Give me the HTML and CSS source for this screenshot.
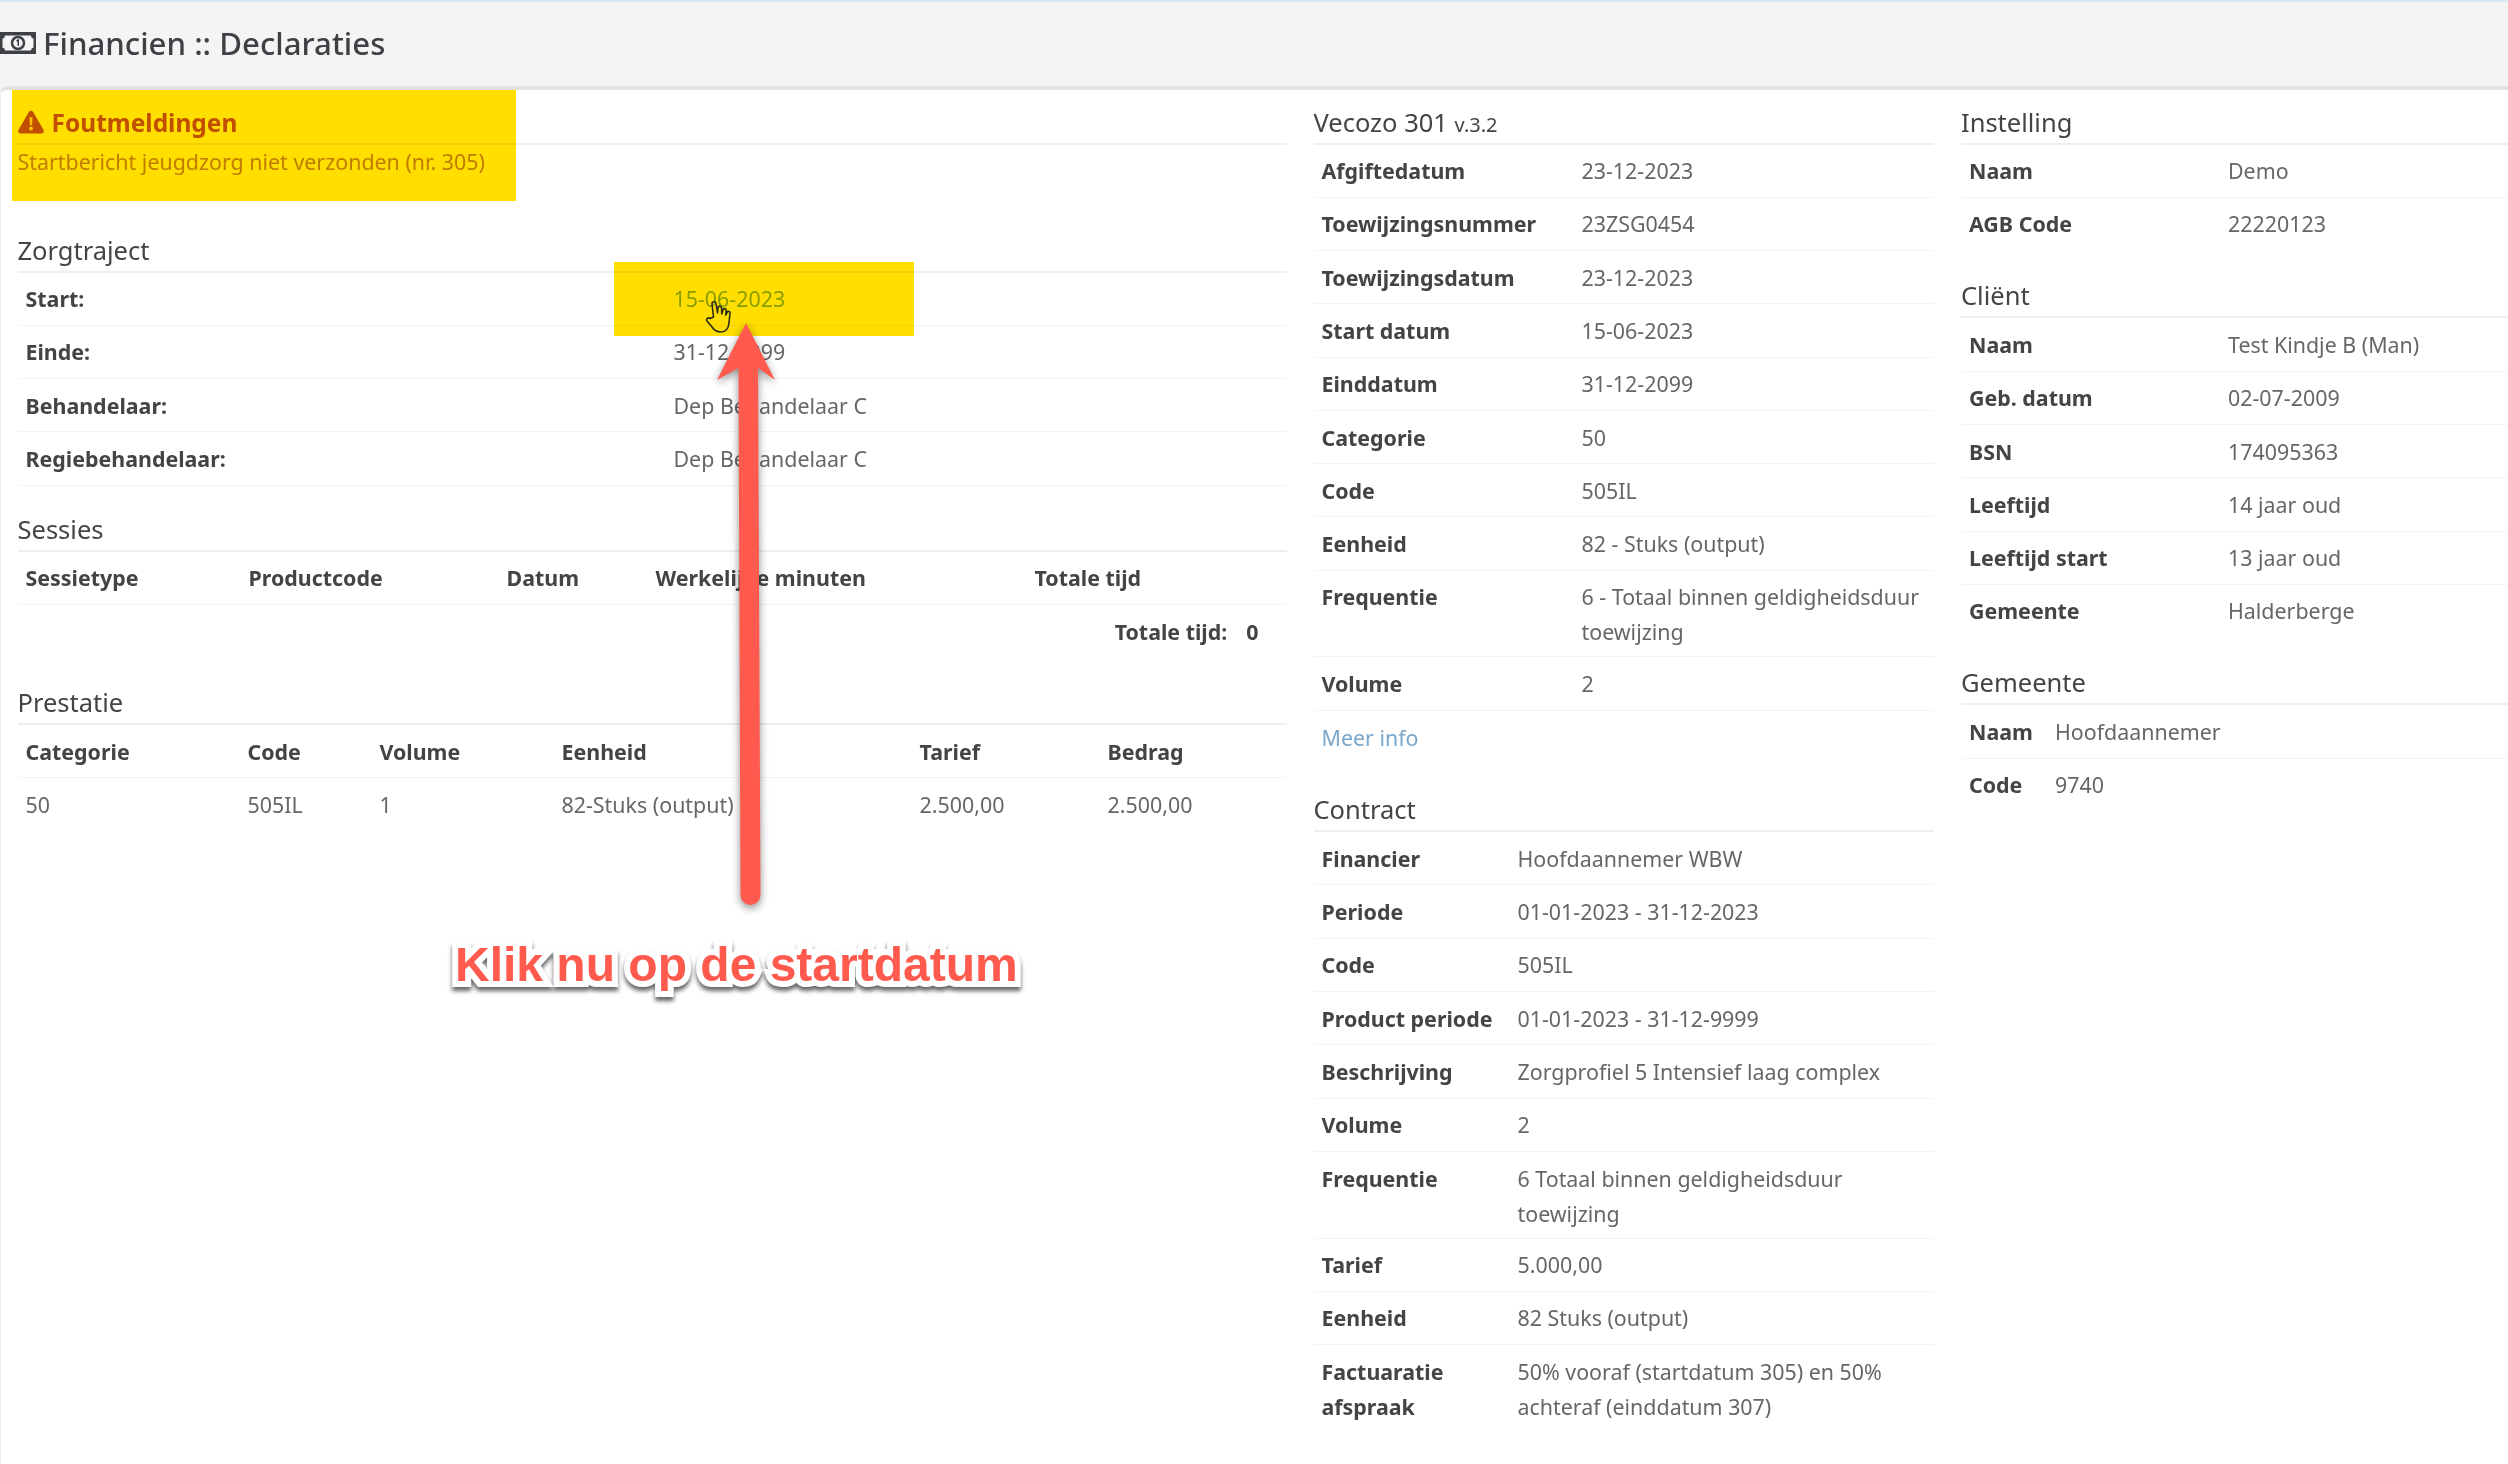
FILE: index.html
```html
<!DOCTYPE html>
<html lang="en">
<head>
  <meta charset="UTF-8">
  <title>Financien :: Declaraties</title>
  <link rel="stylesheet" href="styles.css">
</head>
<body>
  <header class="page-header">
    <svg class="money-icon" viewBox="0 0 36 22" width="36" height="22">
      <path d="M0 0H36V22H0Z M5 3.500A3 3 0 0 1 2.500 6.500V15.500A3 3 0 0 1 5 18.500H31A3 3 0 0 1 33.500 15.500V6.500A3 3 0 0 1 31 3.500Z" fill="#3d4044" fill-rule="evenodd"/>
      <circle cx="18" cy="11" r="6" fill="none" stroke="#3d4044" stroke-width="2.500"/>
      <path d="M16.500 9L18.300 8V14" fill="none" stroke="#3d4044" stroke-width="1.500"/>
    </svg>
    <h1>Financien :: Declaraties</h1>
  </header>

  <main class="content">
    <div class="col">
      <section class="errors">
        <h3 class="section-title error-title">
          <svg viewBox="0 0 24 22" width="26" height="24"><path d="M12 0.500a2.400 2.400 0 0 1 2 1.200l9.500 16.500a2.400 2.400 0 0 1-2 3.500H2.500a2.400 2.400 0 0 1-2-3.500L10 1.700a2.400 2.400 0 0 1 2-1.200Z" fill="#c05a00"/><path d="M10.600 6.500h2.800l-.4 7.500h-2Z M12 15.200a1.800 1.800 0 1 0 .01 0Z" fill="#ffde00"/></svg>
          Foutmeldingen
        </h3>
        <p class="error-text">Startbericht jeugdzorg niet verzonden (nr. 305)</p>
      </section>

      <section class="block">
        <h3 class="section-title">Zorgtraject</h3>
        <table class="data traject">
          <tr><th>Start:</th><td class="link">15-06-2023</td></tr>
          <tr><th>Einde:</th><td>31-12-2099</td></tr>
          <tr><th>Behandelaar:</th><td>Dep Behandelaar C</td></tr>
          <tr><th>Regiebehandelaar:</th><td>Dep Behandelaar C</td></tr>
        </table>
      </section>

      <section class="block">
        <h3 class="section-title">Sessies</h3>
        <table class="data sessies">
          <tr><th>Sessietype</th><th>Productcode</th><th>Datum</th><th>Werkelijke minuten</th><th>Totale tijd</th></tr>
          <tr class="no-line"><td colspan="5" class="total"><strong>Totale tijd:</strong><strong>0</strong></td></tr>
        </table>
      </section>

      <section class="block">
        <h3 class="section-title">Prestatie</h3>
        <table class="data prestatie">
          <tr><th>Categorie</th><th>Code</th><th>Volume</th><th>Eenheid</th><th>Tarief</th><th>Bedrag</th></tr>
          <tr class="no-line"><td>50</td><td>505IL</td><td>1</td><td>82-Stuks (output)</td><td>2.500,00</td><td>2.500,00</td></tr>
        </table>
      </section>
    </div>

    <div class="col">
      <section class="block">
        <h3 class="section-title">Vecozo 301 <small>v.3.2</small></h3>
        <table class="data vecozo">
          <tr><th>Afgiftedatum</th><td>23-12-2023</td></tr>
          <tr><th>Toewijzingsnummer</th><td>23ZSG0454</td></tr>
          <tr><th>Toewijzingsdatum</th><td>23-12-2023</td></tr>
          <tr><th>Start datum</th><td>15-06-2023</td></tr>
          <tr><th>Einddatum</th><td>31-12-2099</td></tr>
          <tr><th>Categorie</th><td>50</td></tr>
          <tr><th>Code</th><td>505IL</td></tr>
          <tr><th>Eenheid</th><td>82 - Stuks (output)</td></tr>
          <tr class="two-line"><th>Frequentie</th><td>6 - Totaal binnen geldigheidsduur toewijzing</td></tr>
          <tr><th>Volume</th><td>2</td></tr>
          <tr class="no-line"><td colspan="2" class="more">Meer info</td></tr>
        </table>
      </section>

      <section class="block">
        <h3 class="section-title">Contract</h3>
        <table class="data contract">
          <tr><th>Financier</th><td>Hoofdaannemer WBW</td></tr>
          <tr><th>Periode</th><td>01-01-2023 - 31-12-2023</td></tr>
          <tr><th>Code</th><td>505IL</td></tr>
          <tr><th>Product periode</th><td>01-01-2023 - 31-12-9999</td></tr>
          <tr><th>Beschrijving</th><td>Zorgprofiel 5 Intensief laag complex</td></tr>
          <tr><th>Volume</th><td>2</td></tr>
          <tr class="two-line"><th>Frequentie</th><td>6 Totaal binnen geldigheidsduur toewijzing</td></tr>
          <tr><th>Tarief</th><td>5.000,00</td></tr>
          <tr><th>Eenheid</th><td>82 Stuks (output)</td></tr>
          <tr class="no-line"><th>Factuaratie afspraak</th><td>50% vooraf (startdatum 305) en 50% achteraf (einddatum 307)</td></tr>
        </table>
      </section>
    </div>

    <div class="col">
      <section class="block">
        <h3 class="section-title">Instelling</h3>
        <table class="data info">
          <tr><th>Naam</th><td>Demo</td></tr>
          <tr class="no-line"><th>AGB Code</th><td>22220123</td></tr>
        </table>
      </section>

      <section class="block">
        <h3 class="section-title">Cliënt</h3>
        <table class="data info">
          <tr><th>Naam</th><td>Test Kindje B (Man)</td></tr>
          <tr><th>Geb. datum</th><td>02-07-2009</td></tr>
          <tr><th>BSN</th><td>174095363</td></tr>
          <tr><th>Leeftijd</th><td>14 jaar oud</td></tr>
          <tr><th>Leeftijd start</th><td>13 jaar oud</td></tr>
          <tr class="no-line"><th>Gemeente</th><td>Halderberge</td></tr>
        </table>
      </section>

      <section class="block">
        <h3 class="section-title">Gemeente</h3>
        <table class="data gemeente">
          <tr><th>Naam</th><td>Hoofdaannemer</td></tr>
          <tr class="no-line"><th>Code</th><td>9740</td></tr>
        </table>
      </section>
    </div>
  </main>

  <!-- video annotations on top of the page -->
  <div class="mark mark-error"></div>
  <div class="mark mark-date"></div>

  <svg class="arrow" viewBox="0 0 90 610" width="90" height="610">
    <path d="M36 13L65 70L48 58L50.500 585A10 10 0 0 1 30.500 585L28.500 58L7 70Z" fill="#ff5a4d"/>
  </svg>

  <svg class="hand" viewBox="0 0 26 34" width="26" height="34">
    <path d="M8.500 17L7 4a2 2 0 0 1 4-.5L12.500 13L13 7.500a1.800 1.800 0 0 1 3.500 0L16.800 14L18 9.500a1.700 1.700 0 0 1 3.200.6L20.700 15L22.300 12a1.500 1.500 0 0 1 2.700 1L24 23c-.5 5-3 9-8 9c-5 0-7-2-9-5L2 21c-1.300-2 1-4 3-2.500Z" fill="#ffde00" fill-opacity=".35" stroke="#2a2a1a" stroke-width="1.600" stroke-linejoin="round"/>
  </svg>

  <div class="callout">Klik nu op de startdatum</div>
</body>
</html>
```

FILE: styles.css
```css
* {
  box-sizing: border-box;
}

body {
  margin: 0;
  min-height: 100vh;
  overflow: hidden;
  background: #f4f4f4;
  font-family: "Noto Sans", sans-serif;
  font-size: 21.400px;
  line-height: 35px;
  color: #666;
}

.page-header {
  display: flex;
  align-items: center;
  gap: 7px;
  height: 86px;
  padding-bottom: 2px;
  border-top: 2px solid #d6e8f5;
  background: #f4f4f4;
}

.page-header h1 {
  margin: 0;
  font-size: 31.200px;
  font-weight: 500;
  color: #3d4044;
}

.money-icon {
  flex: none;
}

.content {
  display: grid;
  grid-template-columns: 1269px 620.500px 1fr;
  column-gap: 27px;
  height: 1378px;
  padding: 14.500px 0 0 16.500px;
  background: #fff;
  border-top: 4px solid #e2e2e2;
  border-left: 1px solid #eee;
  border-top-left-radius: 8px;
}

.block {
  margin-bottom: 26px;
}

.section-title {
  height: 40px;
  margin: 0;
  border-bottom: 2px solid #eee;
  font-size: 25.500px;
  font-weight: 400;
  line-height: 35px;
  color: #444;
}

.section-title small {
  font-size: 20px;
}

.errors {
  margin-bottom: 35px;
}

.error-title {
  display: flex;
  align-items: center;
  gap: 8px;
  padding-bottom: 3px;
  font-size: 24.500px;
  font-weight: 700;
  color: #c05a00;
}

.error-text {
  height: 53px;
  margin: 0;
  line-height: 34px;
  color: #c0902a;
}

.data {
  width: 100%;
  border-collapse: collapse;
  table-layout: fixed;
}

.data th,
.data td {
  padding: 8.650px 8px;
  border-bottom: 1px solid #f4f4f4;
  text-align: left;
  vertical-align: top;
}

.data th {
  font-weight: 700;
  color: #444;
}

.data .no-line th,
.data .no-line td {
  border-bottom-color: transparent;
}

.data .two-line th,
.data .two-line td {
  padding-bottom: 7px;
}

.data .link {
  color: #8ab5c8;
}

.data .more {
  padding-top: 9px;
  padding-bottom: 10.500px;
  color: #7aa7cc;
}

.data .total {
  padding-top: 9px;
  padding-bottom: 9px;
  padding-right: 28px;
  text-align: right;
  color: #444;
}

.total strong:first-child {
  margin-right: 19px;
}

.traject th { width: 648px; }

.sessies th:nth-child(1) { width: 223px; }
.sessies th:nth-child(2) { width: 258px; }
.sessies th:nth-child(3) { width: 149px; }
.sessies th:nth-child(4) { width: 379px; }

.prestatie th:nth-child(1) { width: 222px; }
.prestatie th:nth-child(2) { width: 132px; }
.prestatie th:nth-child(3) { width: 182px; }
.prestatie th:nth-child(4) { width: 358px; }
.prestatie th:nth-child(5) { width: 188px; }

.vecozo th { width: 260px; }
.contract th { width: 196px; }
.info th { width: 259px; }
.gemeente th { width: 86px; }

.data.info .no-line th,
.data.info .no-line td {
  padding-bottom: 10px;
}

.mark {
  position: absolute;
  background: #ffde00;
  mix-blend-mode: multiply;
}

.mark-error {
  left: 12px;
  top: 90px;
  width: 504px;
  height: 111px;
}

.mark-date {
  left: 614px;
  top: 262px;
  width: 300px;
  height: 74px;
}

.arrow {
  position: absolute;
  left: 710px;
  top: 310px;
  filter: drop-shadow(0 3px 4px rgba(0, 0, 0, 0.45));
}

.hand {
  position: absolute;
  left: 705px;
  top: 300px;
}

.callout {
  position: absolute;
  left: 455px;
  top: 935px;
  font-family: "Liberation Sans", sans-serif;
  font-size: 48px;
  font-weight: 700;
  line-height: 60px;
  white-space: nowrap;
  color: #ff5a4d;
  -webkit-text-stroke: 12px #fff;
  paint-order: stroke fill;
  filter: drop-shadow(0 4px 2px rgba(0, 0, 0, 0.6));
}
```
